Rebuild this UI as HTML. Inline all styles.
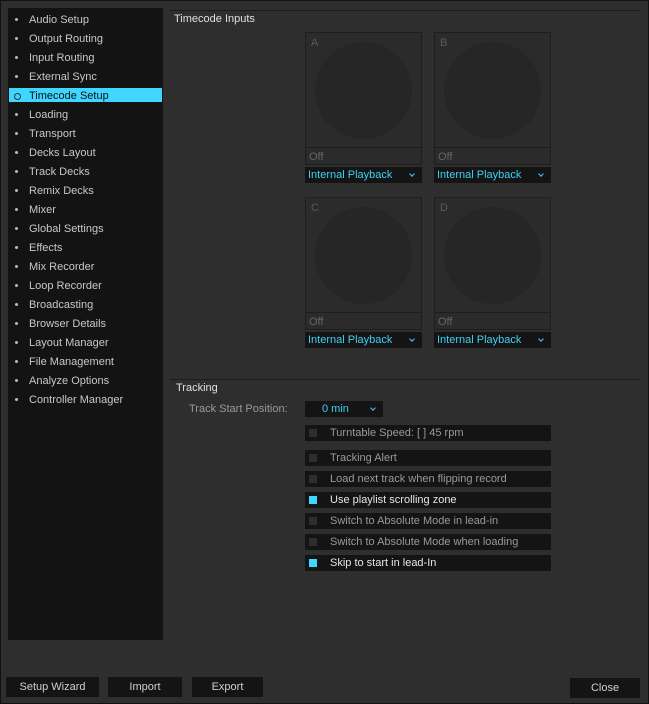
<!DOCTYPE html>
<html><head><style>
*{margin:0;padding:0;box-sizing:border-box}
body{width:649px;height:704px;background:#2e2e2e;font-family:"Liberation Sans",sans-serif;font-size:11px;position:relative;overflow:hidden;color:#ccc}
.frame{position:absolute;left:0;top:0;width:649px;height:704px;border:1px solid #111}
.side{position:absolute;left:8px;top:8px;width:155px;height:632px;background:#131313}
.it{position:absolute;left:1px;width:153px;height:14px;line-height:16px;color:#c8c8c8;padding-left:20px}
.it:before{content:"";position:absolute;left:6px;top:6px;width:3px;height:3px;background:#bbb;border-radius:50%}
.it.sel{background:#3fd7ff;color:#111}
.it.sel:before{left:5px;top:5px;width:5px;height:5px;background:none;border:1px solid #333}
.abs{position:absolute}
.deck{position:absolute;width:117px;height:133px;border:1px solid #1e1e1e;background:#2b2b2b}
.deck .l{position:absolute;left:5px;top:4px;color:#5a5a5a;font-size:11px}
.deck .c{position:absolute;left:9px;top:9px;width:97px;height:97px;border-radius:50%;background:#262626}
.deck .off{position:absolute;left:0;bottom:0;width:115px;height:17px;border-top:1px solid #1e1e1e;color:#666;padding-left:3px;line-height:18px}
.dd{position:absolute;width:117px;height:16px;background:#141414;color:#3fd0f5;line-height:17px;padding-left:3px;font-size:11px}
.dd:after{content:"";position:absolute;right:8px;top:5px;width:3px;height:3px;border-right:1px solid #3fd0f5;border-bottom:1px solid #3fd0f5;transform:rotate(45deg)}
.cb{position:absolute;left:305px;width:246px;height:16px;background:#141414;color:#9a9a9a;line-height:17px;padding-left:25px}
.cb:before{content:"";position:absolute;left:4px;top:4px;width:8px;height:8px;background:#2e2e2e}
.cb.on{color:#e6e6e6}
.cb.on:before{background:#3fd7ff}
.btn{position:absolute;background:#141414;color:#d0d0d0;text-align:center;height:20px;line-height:21px;font-size:11px}
</style></head><body>
<div class="frame"></div>
<div class="side">
<div class="it" style="top:4px">Audio Setup</div>
<div class="it" style="top:23px">Output Routing</div>
<div class="it" style="top:42px">Input Routing</div>
<div class="it" style="top:61px">External Sync</div>
<div class="it sel" style="top:80px">Timecode Setup</div>
<div class="it" style="top:99px">Loading</div>
<div class="it" style="top:118px">Transport</div>
<div class="it" style="top:137px">Decks Layout</div>
<div class="it" style="top:156px">Track Decks</div>
<div class="it" style="top:175px">Remix Decks</div>
<div class="it" style="top:194px">Mixer</div>
<div class="it" style="top:213px">Global Settings</div>
<div class="it" style="top:232px">Effects</div>
<div class="it" style="top:251px">Mix Recorder</div>
<div class="it" style="top:270px">Loop Recorder</div>
<div class="it" style="top:289px">Broadcasting</div>
<div class="it" style="top:308px">Browser Details</div>
<div class="it" style="top:327px">Layout Manager</div>
<div class="it" style="top:346px">File Management</div>
<div class="it" style="top:365px">Analyze Options</div>
<div class="it" style="top:384px">Controller Manager</div>
</div>
<div class="abs" style="left:170px;top:10px;width:470px;height:1px;background:#1c1c1c"></div>
<div class="abs" style="left:174px;top:13px;color:#e0e0e0;font-size:11px">Timecode Inputs</div>

<div class="deck" style="left:305px;top:32px"><span class="l">A</span><div class="c"></div><div class="off">Off</div></div>
<div class="deck" style="left:434px;top:32px"><span class="l">B</span><div class="c"></div><div class="off">Off</div></div>
<div class="dd" style="left:305px;top:167px">Internal Playback</div>
<div class="dd" style="left:434px;top:167px">Internal Playback</div>
<div class="deck" style="left:305px;top:197px"><span class="l">C</span><div class="c"></div><div class="off">Off</div></div>
<div class="deck" style="left:434px;top:197px"><span class="l">D</span><div class="c"></div><div class="off">Off</div></div>
<div class="dd" style="left:305px;top:332px">Internal Playback</div>
<div class="dd" style="left:434px;top:332px">Internal Playback</div>

<div class="abs" style="left:170px;top:379px;width:470px;height:1px;background:#1c1c1c"></div>
<div class="abs" style="left:176px;top:382px;color:#e0e0e0">Tracking</div>
<div class="abs" style="left:189px;top:403px;color:#9a9a9a">Track Start Position:</div>
<div class="dd" style="left:305px;top:401px;width:78px;padding-left:17px">0 min</div>
<div class="cb" style="top:425px">Turntable Speed: [ ] 45 rpm</div>
<div class="cb" style="top:450px">Tracking Alert</div>
<div class="cb" style="top:471px">Load next track when flipping record</div>
<div class="cb on" style="top:492px">Use playlist scrolling zone</div>
<div class="cb" style="top:513px">Switch to Absolute Mode in lead-in</div>
<div class="cb" style="top:534px">Switch to Absolute Mode when loading</div>
<div class="cb on" style="top:555px">Skip to start in lead-In</div>

<div class="btn" style="left:6px;top:677px;width:93px">Setup Wizard</div>
<div class="btn" style="left:108px;top:677px;width:74px">Import</div>
<div class="btn" style="left:192px;top:677px;width:71px">Export</div>
<div class="btn" style="left:570px;top:678px;width:70px">Close</div>
</body></html>
